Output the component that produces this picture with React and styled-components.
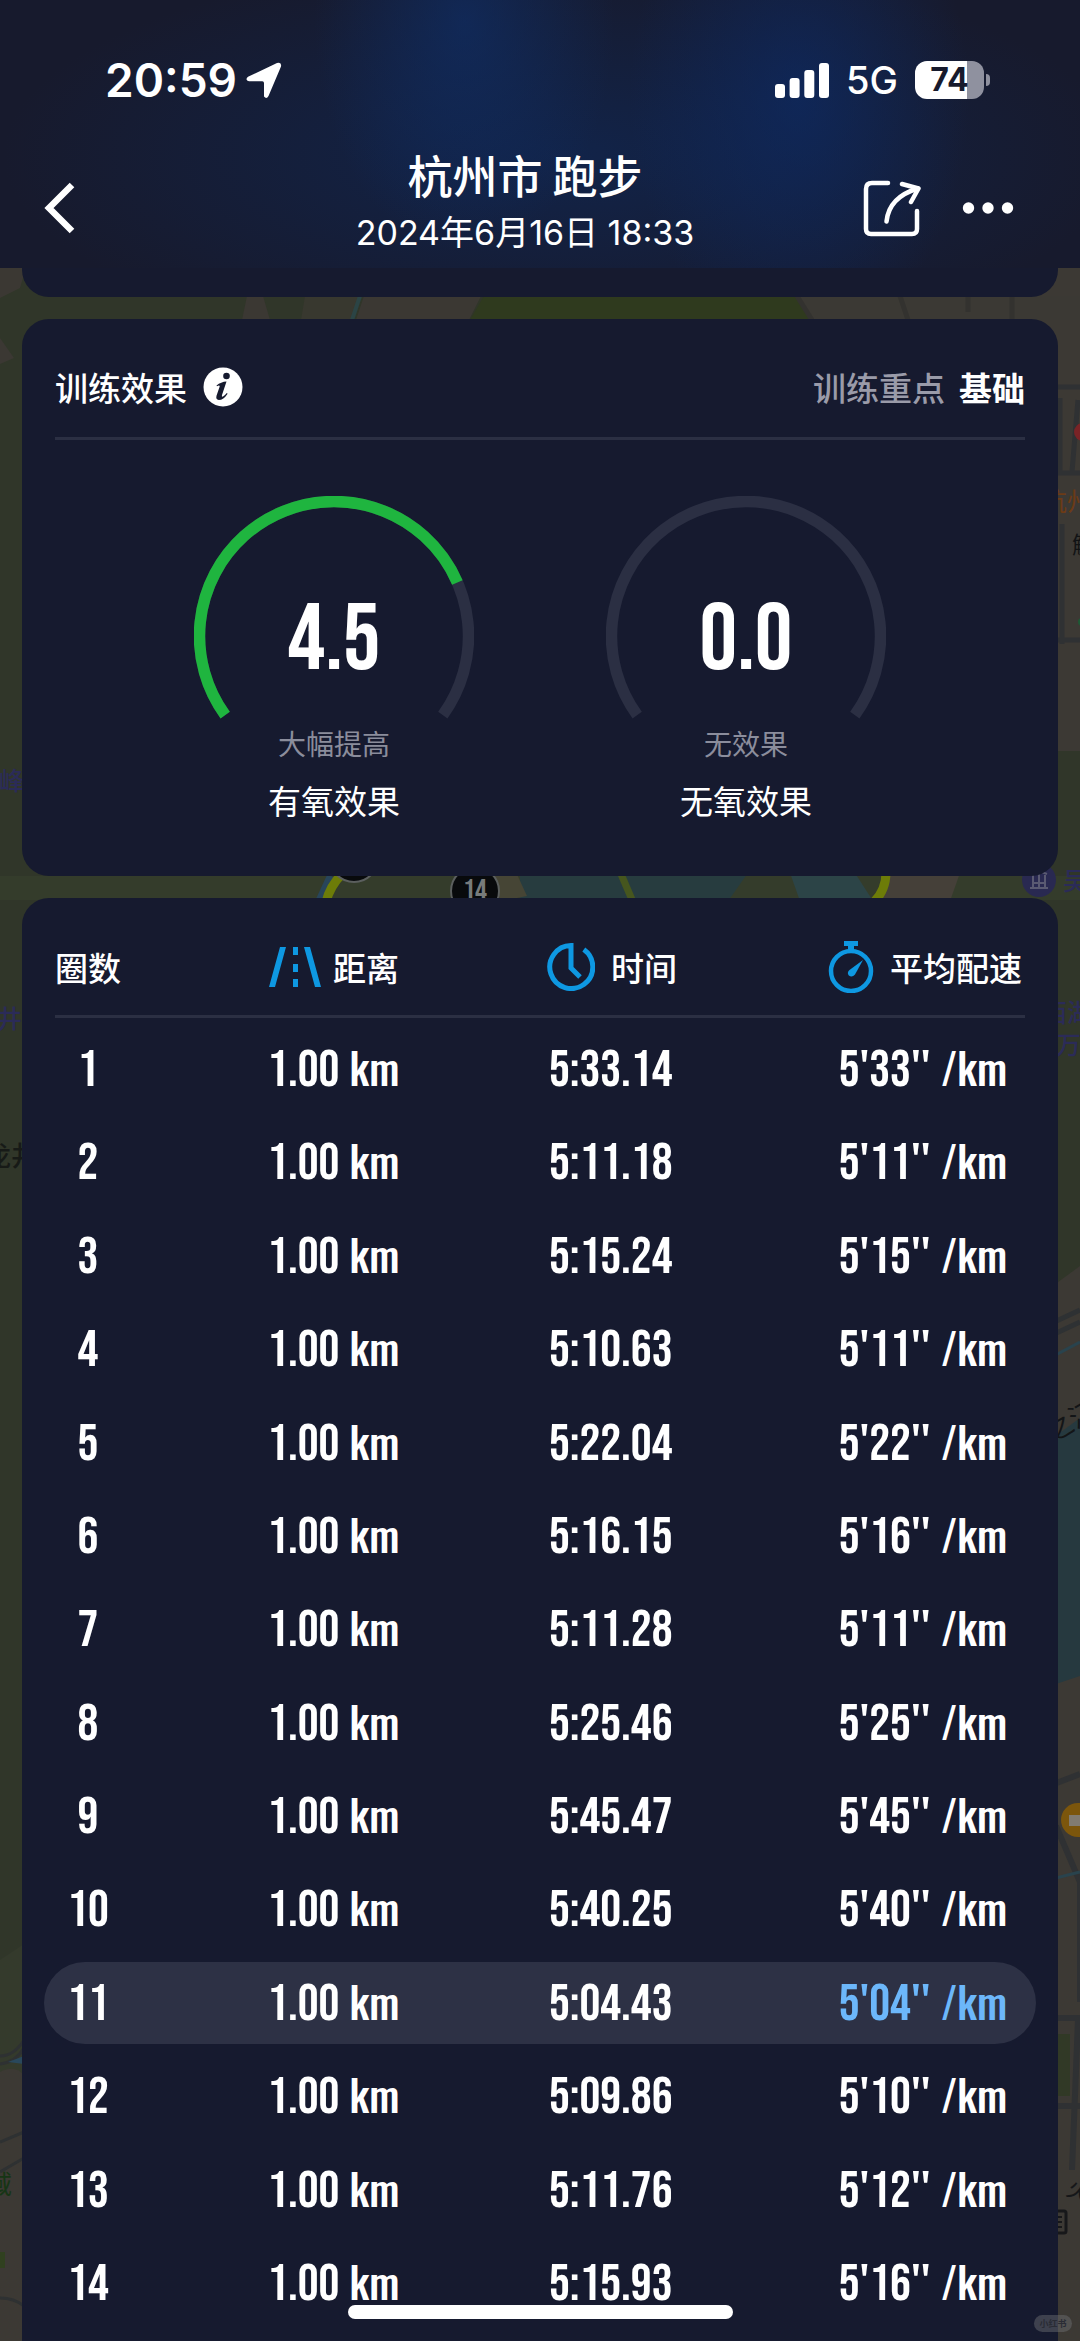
import React from "react";
import styled, { createGlobalStyle } from "styled-components";

const color = {
  panel: "#161a2f",
  line: "#2b2f43",
  pill: "#2d3145",
  muted: "#9a9ba9",
  faint: "#8b8d9c",
  green: "#1fb53f",
  blue: "#0e98e2",
  best: "#6cb7fa",
};

const uiFont = `Inter, "Noto Sans CJK SC", sans-serif`;
const cjkFont = `"Noto Sans CJK SC", sans-serif`;
const numberFont = `"Bebas Neue", "Roboto Condensed", "Liberation Sans", sans-serif`;
const unitFont = `Oswald, "Roboto Condensed", "Liberation Sans", sans-serif`;

const GlobalStyle = createGlobalStyle`
  * { box-sizing: border-box; }
  body {
    margin: 0;
    background: #2f3527;
    color: #fff;
    font-family: ${cjkFont};
    overflow-x: hidden;
  }
  h1, h2, p { margin: 0; }
  button {
    display: flex;
    align-items: center;
    justify-content: center;
    padding: 0;
    border: 0;
    background: none;
    color: inherit;
    font: inherit;
    cursor: pointer;
  }
`;

const Screen = styled.div`
  position: relative;
  display: flex;
  flex-direction: column;
  min-height: 100vh;
  overflow: hidden;
`;

const MapLayer = styled.svg`
  position: absolute;
  inset: 0;
  width: 100%;
  height: 100%;
`;

const TopBar = styled.header`
  position: relative;
  height: 268px;
  background:
    radial-gradient(ellipse 150px 230px at 43% 8%, rgba(14, 48, 108, 0.6), transparent),
    radial-gradient(ellipse 170px 250px at 74% 36%, rgba(12, 44, 106, 0.6), transparent),
    radial-gradient(ellipse 560px 200px at 52% 58%, rgba(14, 42, 92, 0.6), transparent),
    #171a2d;
`;

const StatusBar = styled.div`
  display: flex;
  align-items: center;
  justify-content: space-between;
  padding: 48px 90px 0 105px;
  font-family: ${uiFont};
`;

const StatusGroup = styled.div`
  display: flex;
  align-items: center;
  gap: ${(p) => p.$gap}px;
  height: 64px;
`;

const Clock = styled.span`
  font-size: 46px;
  font-weight: 600;
  line-height: 64px;
`;

const Network = styled.span`
  font-size: 38px;
  font-weight: 500;
  line-height: 64px;
`;

const Battery = styled.span`
  display: flex;
  align-items: center;
  gap: 2px;
`;

const BatteryBody = styled.span`
  width: 69px;
  height: 38px;
  border-radius: 12px;
  background: linear-gradient(90deg, #fff 75%, #8f919f 75%);
  color: #171a2d;
  font-size: 32px;
  font-weight: 700;
  line-height: 38px;
  text-align: center;
`;

const BatteryNub = styled.span`
  width: 4px;
  height: 12px;
  border-radius: 0 4px 4px 0;
  background: #8f919f;
`;

const NavBar = styled.nav`
  display: grid;
  grid-template-columns: 1fr auto 1fr;
  align-items: center;
  height: 126px;
  margin-top: 33px;
  padding: 0 62px 0 32px;
`;

const IconButton = styled.button`
  width: ${(p) => p.$width}px;
  height: 72px;
`;

const Titles = styled.div`
  padding-bottom: 10px;
  text-align: center;
`;

const Title = styled.h1`
  font-size: 45px;
  font-weight: 500;
  line-height: 60px;
`;

const Subtitle = styled.p`
  font-family: ${uiFont};
  font-size: 34px;
  line-height: 56px;
`;

const Actions = styled.div`
  display: flex;
  justify-content: flex-end;
  gap: 34px;
`;

const Main = styled.main`
  position: relative;
  display: flex;
  flex: 1;
  flex-direction: column;
  gap: 22px;
  padding: 0 22px;
`;

const PreviousCard = styled.section`
  height: 29px;
  border-radius: 0 0 27px 27px;
  background: ${color.panel};
`;

const Card = styled.section`
  padding: 0 33px;
  border-radius: 27px;
  background: ${color.panel};
`;

const EffectCard = styled(Card)`
  height: 557px;
`;

const LapCard = styled(Card)`
  flex: 1;
  padding: 0 22px;
  border-radius: 27px 27px 0 0;
`;

const CardHeader = styled.div`
  display: flex;
  align-items: center;
  justify-content: space-between;
  height: 121px;
  padding-top: 18px;
  border-bottom: 3px solid ${color.line};
  font-size: 33px;
  font-weight: 500;
  line-height: 48px;
`;

const CardTitle = styled.h2`
  display: flex;
  align-items: center;
  gap: 16px;
  font: inherit;
`;

const Focus = styled.p`
  display: flex;
  gap: 14px;
  color: ${color.muted};
`;

const FocusValue = styled.strong`
  color: #fff;
  font-weight: 700;
`;

const GaugeRow = styled.div`
  display: grid;
  grid-template-columns: 1fr 1fr;
  padding: 56px 73px 0;
`;

const Gauge = styled.figure`
  display: grid;
  justify-items: center;
  margin: 0;
`;

const GaugeDial = styled.div`
  display: grid;
  place-items: center;
  width: 280px;
  height: 226px;
`;

const GaugeArc = styled.svg`
  grid-area: 1 / 1;
  width: 280px;
  height: 226px;
`;

const GaugeValue = styled.span`
  grid-area: 1 / 1;
  padding-top: 64px;
  font-family: ${numberFont};
  font-size: 94px;
  line-height: 96px;
`;

const GaugeNote = styled.p`
  color: ${color.faint};
  font-size: 28px;
  line-height: 42px;
`;

const GaugeName = styled.figcaption`
  padding-top: 12px;
  font-size: 33px;
  line-height: 48px;
`;

const LapTable = styled.table`
  display: block;
`;

const LapHead = styled.thead`
  display: block;
  margin: 0 11px;
  border-bottom: 3px solid ${color.line};
`;

const LapBody = styled.tbody`
  display: flex;
  flex-direction: column;
  justify-content: space-between;
  height: 1296px;
  margin-top: 10px;
`;

const rowGrid = `
  display: grid;
  grid-template-columns: 66px 130px 130px 200px;
  justify-content: space-between;
  justify-items: center;
`;

const HeadRow = styled.tr`
  ${rowGrid}
  align-items: center;
  height: 117px;
  padding-top: 20px;
`;

const LapRow = styled.tr`
  ${rowGrid}
  align-content: center;
  align-items: baseline;
  height: 82px;
  padding: 0 13px 0 11px;
  border-radius: 41px;
  background: ${(p) => (p.$best ? color.pill : "transparent")};
`;

const HeadCell = styled.th`
  display: flex;
  align-items: center;
  gap: ${(p) => p.$gap || 0}px;
  padding: 0;
  font-size: 33px;
  font-weight: 500;
  line-height: 48px;
  white-space: nowrap;
`;

const Cell = styled.td`
  display: flex;
  align-items: baseline;
  padding: 0;
  color: ${(p) => (p.$accent ? color.best : "#fff")};
  font-family: ${numberFont};
  font-size: 52px;
  line-height: 60px;
  white-space: pre;
`;

const Unit = styled.span`
  font-family: ${unitFont};
  font-size: 42px;
  font-weight: 500;
  line-height: 60px;
`;

const HomeIndicator = styled.div`
  position: absolute;
  bottom: 22px;
  left: 50%;
  width: 385px;
  height: 14px;
  margin-left: -192px;
  border-radius: 7px;
  background: #fff;
`;

const Watermark = styled.span`
  position: absolute;
  right: 8px;
  bottom: 9px;
  width: 38px;
  height: 17px;
  border-radius: 9px;
  background: rgba(110, 112, 118, 0.45);
  color: #2a2c35;
  font-size: 9px;
  font-weight: 700;
  line-height: 17px;
  text-align: center;
`;

function MapBackdrop() {
  return (
    <MapLayer viewBox="0 0 1080 2341" preserveAspectRatio="xMidYMid slice" aria-hidden="true">
      <rect width="1080" height="2341" fill="#303629" />
      <rect x="1000" y="260" width="80" height="491" fill="#3c3934" />
      <path d="M0 268h26l-6 20-20 10z M0 338l14 20-14 6z" fill="#3b3833" />
      <path d="M247 296h16l7 24h-28z" fill="#3b3833" />
      <path d="M305 296h54l-8 24h-50z" fill="#38382f" />
      <path d="M364 296h117l-12 24H356z" fill="#3b3833" />
      <path d="M360 296l-8 24" stroke="#2b4445" strokeWidth="4" />
      <path d="M484 296h312l14 24H470z" fill="#2f3a1e" />
      <path d="M796 296h284v24H810z" fill="#3b3934" />
      <path d="M797 296l15 24M900 296l8 24M968 296v16M1012 296v24" stroke="#33322f" strokeWidth="5" fill="none" />
      <g stroke="#2f3133" strokeWidth="5" fill="none">
        <path d="M1056 387h24M1060 398v76M1056 473h24M1078 400l-6 72M1056 640h24M1062 524v120" />
      </g>
      <circle cx="1083" cy="432" r="9" fill="#7a2326" />
      <circle cx="1082" cy="622" r="4" fill="#1d5a35" />
      <text x="1041" y="511" fill="#6c3b16" fontSize="26" fontFamily="Noto Sans CJK SC, sans-serif">杭州</text>
      <text x="1072" y="553" fontSize="23" fill="#111315" fontFamily="Noto Sans CJK SC, sans-serif">解</text>
      <g fill="#2b2b58" fontSize="25" fontWeight="500" fontFamily="Noto Sans CJK SC, sans-serif">
        <text x="-26" y="790">山峰</text>
        <text x="-28" y="1028">龙井寺</text>
        <text x="1042" y="1022">西湖</text>
        <text x="1056" y="1054">万松</text>
      </g>
      <text x="-16" y="1166" fontSize="27" fontWeight="500" fill="#171a17" fontFamily="Noto Sans CJK SC, sans-serif">龙井</text>

      <rect x="0" y="876" width="1080" height="24" fill="#343c2b" />
      <path d="M520 870h230l-24 34H520z" fill="#273c3f" />
      <path d="M789 870h64l22 34h-74z" fill="#2c4447" />
      <path d="M885 870h76l-12 34h-72z" fill="#454039" />
      <path d="M495 870h20l12 26-30 6z" fill="#464535" />
      <path d="M331 876l-12 26" stroke="#28455a" strokeWidth="8" />
      <path d="M342 874q-12 12-16 28" stroke="#6d7c08" strokeWidth="9" fill="none" />
      <path d="M621 874l12 28" stroke="#46561e" strokeWidth="7" />
      <path d="M886 872q0 18-12 30" stroke="#6d7c08" strokeWidth="9" fill="none" />
      <circle cx="354" cy="858" r="24" fill="#080a0c" stroke="#5b5f5e" strokeWidth="2" />
      <circle cx="475" cy="891" r="24" fill="#080a0c" stroke="#5b5f5e" strokeWidth="2" />
      <text x="475" y="900" fontSize="30" fill="#777b7b" textAnchor="middle" fontFamily="Bebas Neue, Roboto Condensed, sans-serif">14</text>
      <circle cx="1039" cy="880" r="17" fill="#292951" />
      <path d="M1030 888h18M1032 883h14M1033 875v12M1039 873v14M1045 875v12M1031 874l8-3 8 3" stroke="#5a5a72" strokeWidth="2" fill="none" />
      <text x="1063" y="890" fill="#2b2b58" fontSize="25" fontWeight="500" fontFamily="Noto Sans CJK SC, sans-serif">吴山</text>

      <path d="M1050 1288l30-22v1075h-30z" fill="#3c3934" />
      <path d="M1050 1324l30-14M1050 1336l30-14" stroke="#2e3133" strokeWidth="5" />
      <path d="M1050 1358l30-16" stroke="#29434d" strokeWidth="3" />
      <path d="M1050 1440l30-22v258l-30 10z" fill="#26393f" />
      <text x="1042" y="1436" fontSize="27" fill="#131517" transform="rotate(-30 1060 1420)" fontFamily="Noto Sans CJK SC, sans-serif">之江</text>
      <path d="M1054 1784l26-10M1056 1826l24 56v120M1056 2018h24M1056 2106h24M1078 2020l-6 150" stroke="#2f3133" strokeWidth="6" fill="none" />
      <path d="M1056 1878l24-6" stroke="#29434d" strokeWidth="3" />
      <rect x="1056" y="2034" width="14" height="62" fill="#313926" />
      <circle cx="1078" cy="1820" r="17" fill="#7c560c" />
      <rect x="1069" y="1815" width="16" height="11" fill="#817b70" />
      <text x="1068" y="2200" fontSize="24" fill="#161719" transform="rotate(24 1080 2190)" fontFamily="Noto Sans CJK SC, sans-serif">火</text>
      <rect x="1050" y="2211" width="16" height="22" rx="2" fill="none" stroke="#17181a" strokeWidth="3" />
      <path d="M1053 2217h9M1053 2222h9M1053 2227h9" stroke="#17181a" strokeWidth="2" />

      <path d="M0 1960l24-16v397H0z" fill="#343a2c" />
      <path d="M0 2072q16-8 24 4v265H0z" fill="#3c3934" />
      <path d="M0 2056q14 0 24-16M0 2064q16-2 24-16M0 2142l24-10M0 2172l24-14M0 2298q14 0 24 8" stroke="#2e3132" strokeWidth="3" fill="none" />
      <path d="M8 2062l16-6v8z" fill="#29485c" />
      <path d="M0 2252h5v16H0z" fill="#30401f" />
      <text x="-14" y="2194" fontSize="26" fill="#163515" fontFamily="Noto Sans CJK SC, sans-serif">域</text>
    </MapLayer>
  );
}

function ArcGauge({ value, ratio, note, name }) {
  const arc = "M31.2 219.1A134.5 134.5 0 1 1 248.8 219.1";
  return (
    <Gauge>
      <GaugeDial>
        <GaugeArc viewBox="0 0 280 226" fill="none" strokeWidth="11.5" aria-hidden="true">
          <path d={arc} stroke={color.line} />
          {ratio > 0 && (
            <path d={arc} stroke={color.green} pathLength="1000" strokeDasharray={`${ratio * 1000} 1000`} />
          )}
        </GaugeArc>
        <GaugeValue>{value}</GaugeValue>
      </GaugeDial>
      <GaugeNote>{note}</GaugeNote>
      <GaugeName>{name}</GaugeName>
    </Gauge>
  );
}

const LocationIcon = () => (
  <svg width="36" height="36" viewBox="0 0 36 36" aria-hidden="true">
    <path
      d="M2 14.800L31 1Q35.800 -.5 35 4.500L22.500 34Q20.500 37.500 18 34.500V21Q18 19.200 16.300 19.200H3Q-1.500 18 2 14.800z"
      fill="#fff"
    />
  </svg>
);

const SignalIcon = () => (
  <svg width="54" height="35" viewBox="0 0 54 35" fill="#fff" aria-hidden="true">
    <rect x="0" y="21" width="10" height="14" rx="3" />
    <rect x="14.600" y="15" width="10" height="20" rx="3" />
    <rect x="29.300" y="7" width="10" height="28" rx="3" />
    <rect x="44" y="0" width="10" height="35" rx="3" />
  </svg>
);

const BackIcon = () => (
  <svg width="32" height="52" viewBox="0 0 32 52" aria-hidden="true">
    <path d="M28 3L5 26l23 23" fill="none" stroke="#fff" strokeWidth="6.500" />
  </svg>
);

const ShareIcon = () => (
  <svg width="58" height="58" viewBox="0 0 58 58" fill="none" stroke="#fff" strokeWidth="4.500" strokeLinecap="round" strokeLinejoin="round" aria-hidden="true">
    <path d="M25 4H9Q3 4 3 10v40q0 5 5 5h41q5 0 5-5V32" />
    <path d="M23.500 42.500Q26 18 55 9.500" />
    <path d="M39 5l16.500 4.500-7.500 13.500" />
  </svg>
);

const MoreIcon = () => (
  <svg width="52" height="12" viewBox="0 0 52 12" fill="#fff" aria-hidden="true">
    <circle cx="6.500" cy="6" r="5.700" />
    <circle cx="26" cy="6" r="5.700" />
    <circle cx="45.500" cy="6" r="5.700" />
  </svg>
);

const InfoIcon = () => (
  <svg width="40" height="40" viewBox="0 0 40 40" aria-hidden="true">
    <circle cx="20" cy="20" r="19.500" fill="#fff" />
    <circle cx="23.500" cy="9" r="3.300" fill={color.panel} />
    <path
      d="M13.500 18.500Q18 14.800 23.500 14.500L19 28Q18.400 30.300 20 29.600 21.500 28.800 23.800 26L24.600 26.700Q20.500 33 15.800 33 12.500 32.600 13.500 28.800L16.700 19.600Q16.800 17.800 14 19.200z"
      fill={color.panel}
    />
  </svg>
);

const RoadIcon = () => (
  <svg width="52" height="42" viewBox="0 0 52 42" fill={color.blue} aria-hidden="true">
    <path d="M11 1h6L6 41H0zM35 1h6l11 40h-6zM24 1h5v8h-5zM24 18h5v8h-5zM24 33h5v8h-5z" />
  </svg>
);

const ClockIcon = () => (
  <svg width="48" height="48" viewBox="0 0 48 48" fill="none" stroke={color.blue} strokeWidth="5" aria-hidden="true">
    <path d="M36.800 6.500A21.500 21.500 0 1 1 24 2.500V25l9 9" />
  </svg>
);

const StopwatchIcon = () => (
  <svg width="46" height="52" viewBox="0 0 46 52" fill="none" aria-hidden="true">
    <circle cx="23" cy="30" r="20" stroke={color.blue} strokeWidth="4.500" />
    <path d="M16 0h14v5h-4v4h-6V5h-4z" fill={color.blue} />
    <path d="M35 19L27 33.500Q24 37 20.800 34.500 18.600 31.500 21.500 29z" fill={color.blue} />
  </svg>
);

const laps = [
  ["5:33.14", "5'33''"],
  ["5:11.18", "5'11''"],
  ["5:15.24", "5'15''"],
  ["5:10.63", "5'11''"],
  ["5:22.04", "5'22''"],
  ["5:16.15", "5'16''"],
  ["5:11.28", "5'11''"],
  ["5:25.46", "5'25''"],
  ["5:45.47", "5'45''"],
  ["5:40.25", "5'40''"],
  ["5:04.43", "5'04''"],
  ["5:09.86", "5'10''"],
  ["5:11.76", "5'12''"],
  ["5:15.93", "5'16''"],
];
const bestLap = 10;

export default function App() {
  return (
    <Screen>
      <GlobalStyle />
      <MapBackdrop />
      <TopBar>
        <StatusBar>
          <StatusGroup $gap={9}>
            <Clock>20:59</Clock>
            <LocationIcon />
          </StatusGroup>
          <StatusGroup $gap={17}>
            <SignalIcon />
            <Network>5G</Network>
            <Battery>
              <BatteryBody>74</BatteryBody>
              <BatteryNub />
            </Battery>
          </StatusGroup>
        </StatusBar>
        <NavBar>
          <IconButton $width={56} aria-label="返回">
            <BackIcon />
          </IconButton>
          <Titles>
            <Title>杭州市 跑步</Title>
            <Subtitle>2024年6月16日 18:33</Subtitle>
          </Titles>
          <Actions>
            <IconButton $width={64} aria-label="分享">
              <ShareIcon />
            </IconButton>
            <IconButton $width={60} aria-label="更多">
              <MoreIcon />
            </IconButton>
          </Actions>
        </NavBar>
      </TopBar>

      <Main>
        <PreviousCard />

        <EffectCard>
          <CardHeader>
            <CardTitle>
              训练效果
              <button aria-label="说明">
                <InfoIcon />
              </button>
            </CardTitle>
            <Focus>
              训练重点 <FocusValue>基础</FocusValue>
            </Focus>
          </CardHeader>
          <GaugeRow>
            <ArcGauge value="4.5" ratio={0.764} note="大幅提高" name="有氧效果" />
            <ArcGauge value="0.0" ratio={0} note="无效果" name="无氧效果" />
          </GaugeRow>
        </EffectCard>

        <LapCard>
          <LapTable>
            <LapHead>
              <HeadRow>
                <HeadCell>圈数</HeadCell>
                <HeadCell $gap={12}>
                  <RoadIcon />
                  距离
                </HeadCell>
                <HeadCell $gap={16}>
                  <ClockIcon />
                  时间
                </HeadCell>
                <HeadCell $gap={16}>
                  <StopwatchIcon />
                  平均配速
                </HeadCell>
              </HeadRow>
            </LapHead>
            <LapBody>
              {laps.map(([time, pace], i) => (
                <LapRow key={i} $best={i === bestLap}>
                  <Cell>{i + 1}</Cell>
                  <Cell>
                    1.00<Unit> km</Unit>
                  </Cell>
                  <Cell>{time}</Cell>
                  <Cell $accent={i === bestLap}>
                    {pace}
                    <Unit> /km</Unit>
                  </Cell>
                </LapRow>
              ))}
            </LapBody>
          </LapTable>
        </LapCard>
      </Main>
      <HomeIndicator />
      <Watermark>小红书</Watermark>
    </Screen>
  );
}
